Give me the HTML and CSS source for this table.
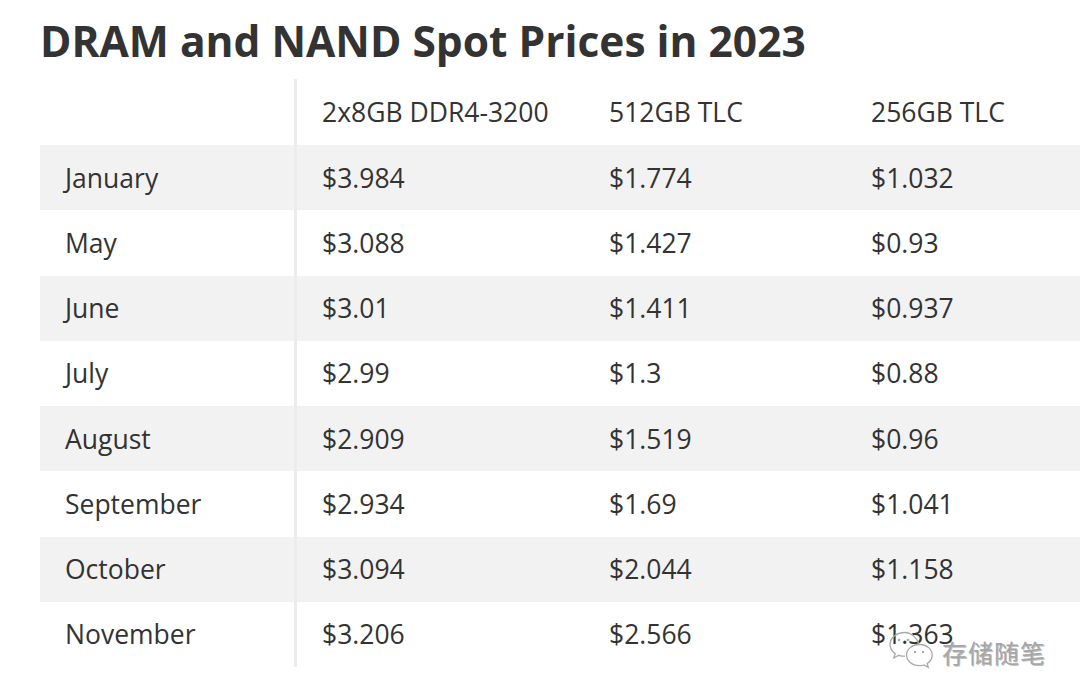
FILE: index.html
```html
<!DOCTYPE html>
<html lang="en">
<head>
<meta charset="utf-8">
<title>DRAM and NAND Spot Prices in 2023</title>
<link rel="stylesheet" href="styles.css">
</head>
<body>
<main class="page">
  <h1 class="title">DRAM and NAND Spot Prices in 2023</h1>
  <table class="prices">
    <thead>
      <tr class="head-row">
        <th class="c-month"></th>
        <th class="c-dram">2x8GB DDR4-3200</th>
        <th class="c-512">512GB TLC</th>
        <th class="c-256">256GB TLC</th>
      </tr>
    </thead>
    <tbody>
      <tr class="odd"><td class="c-month">January</td><td class="c-dram">$3.984</td><td>$1.774</td><td>$1.032</td></tr>
      <tr><td class="c-month">May</td><td class="c-dram">$3.088</td><td>$1.427</td><td>$0.93</td></tr>
      <tr class="odd"><td class="c-month">June</td><td class="c-dram">$3.01</td><td>$1.411</td><td>$0.937</td></tr>
      <tr><td class="c-month">July</td><td class="c-dram">$2.99</td><td>$1.3</td><td>$0.88</td></tr>
      <tr class="odd"><td class="c-month">August</td><td class="c-dram">$2.909</td><td>$1.519</td><td>$0.96</td></tr>
      <tr><td class="c-month">September</td><td class="c-dram">$2.934</td><td>$1.69</td><td>$1.041</td></tr>
      <tr class="odd"><td class="c-month">October</td><td class="c-dram">$3.094</td><td>$2.044</td><td>$1.158</td></tr>
      <tr><td class="c-month">November</td><td class="c-dram">$3.206</td><td>$2.566</td><td>$1.363</td></tr>
    </tbody>
  </table>
  <div class="watermark">
    <svg class="wm-icon" width="48" height="40" viewBox="0 0 48 40" fill="none" stroke="#a8a8a8" stroke-width="1.3">
      <path d="M17 2.5c-8.6 0-15 5.4-15 12 0 3.7 2 6.9 5.2 9.1l-1.4 4.4 5-2.7c1.9.6 4 .9 6.2.9"/>
      <path d="M31 14.5c-1.9-7-8-12-14-12"/>
      <circle cx="11" cy="10" r="1.3" fill="#a8a8a8" stroke="none"/>
      <circle cx="20" cy="10" r="1.3" fill="#a8a8a8" stroke="none"/>
      <path d="M31.5 14.5c-7.5 0-13 4.8-13 10.6s5.5 10.6 13 10.6c1.6 0 3.2-.2 4.6-.7l4.2 2.3-1.1-3.7c3-1.9 5-5 5-8.5 0-5.8-5.4-10.6-12.7-10.6z" fill="#ffffff"/>
      <circle cx="27" cy="22" r="1.2" fill="#a8a8a8" stroke="none"/>
      <circle cx="35" cy="22" r="1.2" fill="#a8a8a8" stroke="none"/>
    </svg>
    <span class="wm-text">存储随笔</span>
  </div>
</main>
</body>
</html>
```

FILE: styles.css
```css
html, body {
  margin: 0;
  padding: 0;
  background: #ffffff;
}

.page {
  position: relative;
  width: 1080px;
  height: 699px;
  overflow: hidden;
  padding-left: 40px;
  box-sizing: border-box;
  font-family: "Open Sans", "Noto Sans", sans-serif;
  color: #333333;
}

.title {
  margin: 13px 0 10px 0;
  font-size: 42.5px;
  line-height: 56px;
  font-weight: 700;
  color: #333333;
  letter-spacing: 0;
}

.prices {
  border-collapse: collapse;
  border-spacing: 0;
  width: 1060px;
  table-layout: fixed;
  font-size: 26.5px;
  color: #333333;
}

.prices th,
.prices td {
  padding: 0 0 0 25px;
  text-align: left;
  vertical-align: middle;
  font-weight: 400;
  white-space: nowrap;
}

.head-row {
  height: 66px;
}

.prices tbody tr {
  height: 65.25px;
}

.prices tr.odd td {
  background: #f2f2f2;
}

.c-month {
  width: 229px;
  border-right: 3px solid #ececec;
}

.c-dram {
  width: 262px;
}

.c-512 {
  width: 237px;
}

.watermark {
  position: absolute;
  left: 888px;
  top: 630px;
  display: flex;
  align-items: center;
  gap: 6px;
}

.wm-icon {
  display: block;
}

.wm-text {
  font-family: "Noto Sans CJK SC", sans-serif;
  font-size: 25px;
  line-height: 30px;
  color: #a6a6a6;
  letter-spacing: 1px;
  margin-top: 4px;
  text-shadow: 1px 1px 0 rgba(80, 80, 80, 0.35);
}
```
